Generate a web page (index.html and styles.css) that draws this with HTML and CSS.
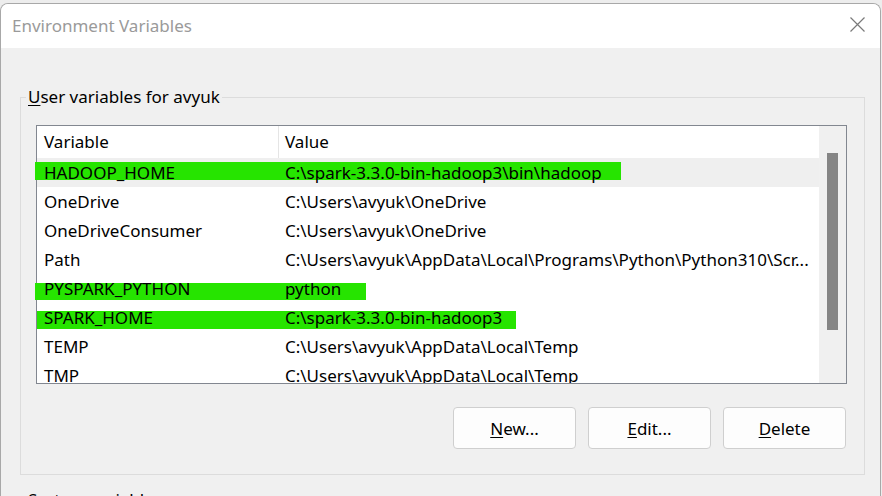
FILE: index.html
```html
<!DOCTYPE html>
<html lang="en">
<head>
<meta charset="utf-8">
<title>Environment Variables</title>
<link rel="stylesheet" href="styles.css">
</head>
<body>
<div class="window">
  <div class="titlebar">
    <span class="title">Environment Variables</span>
    <button class="close" aria-label="Close">
      <svg width="15" height="15" viewBox="0 0 15 15"><path d="M0.5 0.5 L14.5 14.5 M14.5 0.5 L0.5 14.5" stroke="#7a7a7a" stroke-width="1.2" fill="none"/></svg>
    </button>
  </div>
  <div class="content">
    <fieldset class="group">
      <legend><u>U</u>ser variables for avyuk</legend>
      <div class="listbox">
        <div class="list">
          <div class="row head">
            <div class="cell c1">Variable</div>
            <div class="cell c2">Value</div>
          </div>
          <div class="row selected">
            <span class="mark mark-hadoop"></span>
            <div class="cell c1">HADOOP_HOME</div>
            <div class="cell c2">C:\spark-3.3.0-bin-hadoop3\bin\hadoop</div>
          </div>
          <div class="row">
            <div class="cell c1">OneDrive</div>
            <div class="cell c2">C:\Users\avyuk\OneDrive</div>
          </div>
          <div class="row">
            <div class="cell c1">OneDriveConsumer</div>
            <div class="cell c2">C:\Users\avyuk\OneDrive</div>
          </div>
          <div class="row">
            <div class="cell c1">Path</div>
            <div class="cell c2">C:\Users\avyuk\AppData\Local\Programs\Python\Python310\Scr...</div>
          </div>
          <div class="row">
            <span class="mark mark-pyspark"></span>
            <div class="cell c1">PYSPARK_PYTHON</div>
            <div class="cell c2">python</div>
          </div>
          <div class="row">
            <span class="mark mark-spark"></span>
            <div class="cell c1">SPARK_HOME</div>
            <div class="cell c2">C:\spark-3.3.0-bin-hadoop3</div>
          </div>
          <div class="row">
            <div class="cell c1">TEMP</div>
            <div class="cell c2">C:\Users\avyuk\AppData\Local\Temp</div>
          </div>
          <div class="row">
            <div class="cell c1">TMP</div>
            <div class="cell c2">C:\Users\avyuk\AppData\Local\Temp</div>
          </div>
        </div>
        <div class="scrollbar"><div class="thumb"></div></div>
      </div>
      <div class="buttons">
        <button class="btn"><u>N</u>ew...</button>
        <button class="btn"><u>E</u>dit...</button>
        <button class="btn"><u>D</u>elete</button>
      </div>
    </fieldset>
    <fieldset class="group group-system">
      <legend>S<u>y</u>stem variables</legend>
    </fieldset>
  </div>
</div>
</body>
</html>
```
FILE: styles.css
```css
html, body {
  margin: 0;
  padding: 0;
}
body {
  width: 882px;
  height: 496px;
  overflow: hidden;
  background: #ededed;
  font-family: "Noto Sans", "Open Sans", sans-serif;
  font-size: 17px;
  color: #000;
}
.window {
  margin-top: 3px;
  width: 881px;
  height: 493px;
  box-sizing: border-box;
  border: 1px solid #a8a8a8;
  border-bottom: none;
  border-radius: 8px 8px 0 0;
  overflow: hidden;
  background: #f0f0f0;
}
.titlebar {
  height: 44px;
  background: #fff;
  display: flex;
  align-items: center;
  padding-left: 11px;
}
.title {
  color: #9a9a9a;
  line-height: 20px;
}
.close {
  margin-left: auto;
  margin-right: 15px;
  margin-bottom: 3px;
  width: 15px;
  height: 15px;
  padding: 0;
  border: none;
  background: transparent;
  display: flex;
}
.content {
  padding: 39px 15px 0 19px;
}
.group {
  margin: 0;
  border: 1px solid #dcdcdc;
  padding: 18px 17px 25px 15px;
  min-width: 0;
}
.group legend {
  margin-left: -10px;
  padding: 0 2px;
  line-height: 20px;
}
.group-system {
  margin-top: 15px;
  height: 60px;
}
u {
  text-decoration: underline;
  text-underline-offset: 2px;
}
.listbox {
  height: 259px;
  box-sizing: border-box;
  border: 1px solid #828790;
  display: flex;
  background: #fff;
}
.list {
  flex: 1;
  overflow-x: visible;
  overflow-y: clip;
}
.row {
  position: relative;
  display: flex;
  align-items: center;
  height: 29px;
  white-space: nowrap;
}
.row.head {
  height: 32px;
}
.row.selected {
  background: #efefef;
}
.cell {
  position: relative;
  z-index: 1;
  line-height: 20px;
}
.c1 {
  width: 242px;
  box-sizing: border-box;
  padding-left: 7px;
  flex: none;
}
.c2 {
  padding-left: 6px;
}
.head .c1 {
  align-self: stretch;
  display: flex;
  align-items: center;
  border-right: 1px solid #e5e5e5;
}
.mark {
  position: absolute;
  z-index: 0;
  background: #26e400;
}
.mark-hadoop {
  left: -2px;
  top: 4px;
  width: 586px;
  height: 18px;
}
.mark-pyspark {
  left: -2px;
  top: 9px;
  width: 331px;
  height: 17px;
}
.mark-spark {
  left: 0;
  top: 8px;
  width: 479px;
  height: 18px;
}
.scrollbar {
  width: 27px;
  flex: none;
  background: #f0f0f0;
}
.thumb {
  margin: 27px 0 0 8px;
  width: 11px;
  height: 177px;
  background: #858585;
}
.buttons {
  display: flex;
  justify-content: flex-end;
  gap: 12px;
  margin-top: 23px;
  padding-right: 1px;
}
.btn {
  width: 123px;
  height: 42px;
  box-sizing: border-box;
  border: 1px solid #cfcfcf;
  border-radius: 4px;
  background: #fdfdfd;
  font: inherit;
  color: #000;
  padding: 0;
}
```
